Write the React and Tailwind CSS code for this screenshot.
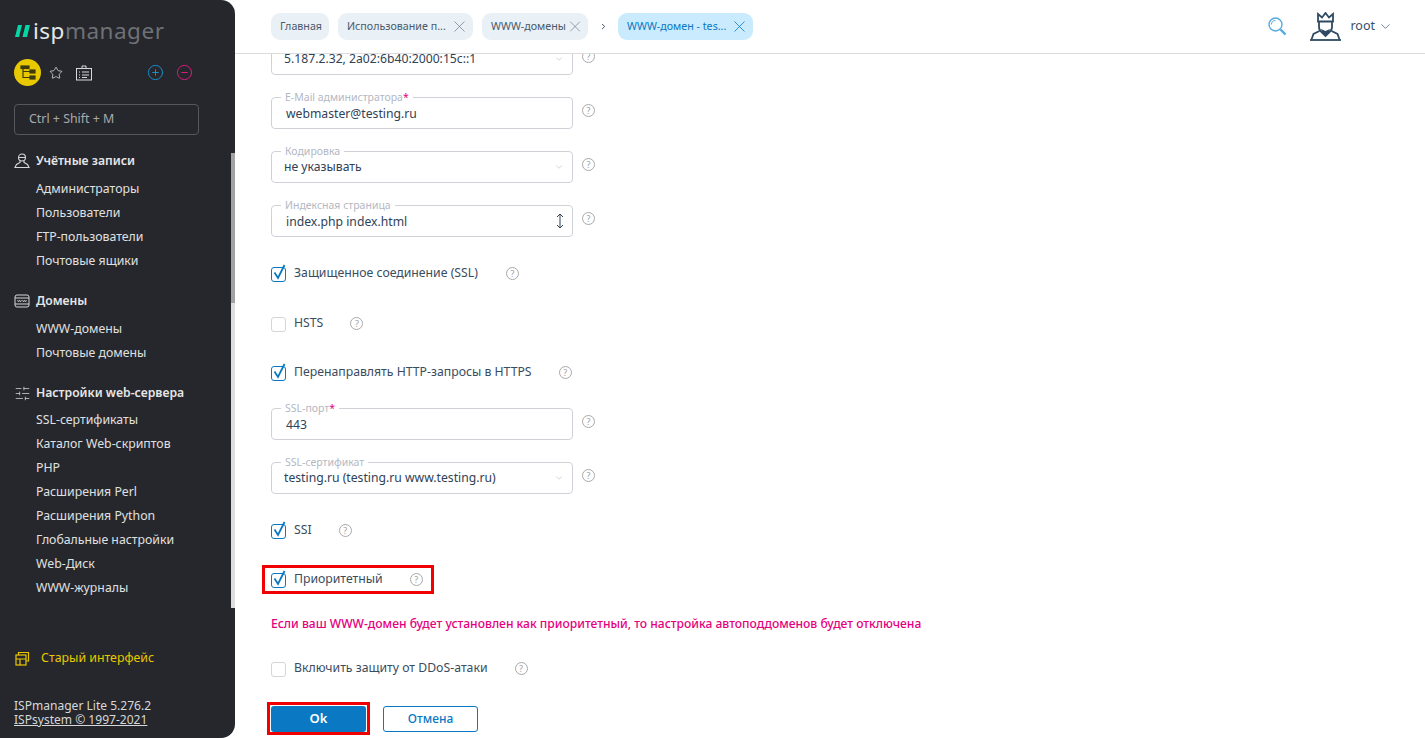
import React from 'react';
import { X, ChevronDown, ChevronRight, Star, CirclePlus, CircleMinus, SlidersHorizontal } from 'lucide-react';

const menu = [
    { title: 'Учётные записи', icon: 'user', gap: 'mt-[4px]', items: ['Администраторы', 'Пользователи', 'FTP-пользователи', 'Почтовые ящики'] },
    { title: 'Домены', icon: 'www', gap: 'mt-[4px]', items: ['WWW-домены', 'Почтовые домены'] },
    { title: 'Настройки web-сервера', icon: 'sliders', gap: 'mt-[3px]', items: ['SSL-сертификаты', 'Каталог Web-скриптов', 'PHP', 'Расширения Perl', 'Расширения Python', 'Глобальные настройки', 'Web-Диск', 'WWW-журналы'] },
];

function MenuIcon({ type }) {
    if (type === 'user') {
        return (
            <svg width="16" height="16" viewBox="0 0 16 16" fill="none" stroke="#d5d6d8" strokeWidth="1.100">
                <circle cx="8" cy="4.500" r="3.500" />
                <path d="M5 4.500h6M6 8v1.500l-3.500 2-1.500 3h14l-1.500-3-3.500-2V8" />
            </svg>
        );
    }
    if (type === 'www') {
        return (
            <svg width="16" height="14" viewBox="0 0 16 14" fill="none" stroke="#d5d6d8" strokeWidth="1">
                <rect x="1" y="1" width="14" height="12" rx="2" />
                <path d="M1 4h14M1 10h14" />
                <path d="M3.500 6l1 2 1-2 1 2 1-2M8.500 6l1 2 1-2 1 2 1-2" strokeWidth="0.700" />
            </svg>
        );
    }
    return <SlidersHorizontal size={17} color="#d5d6d8" strokeWidth={1.100} />;
}

function Sidebar() {
    return (
        <aside className="w-[235px] h-[738px] shrink-0 bg-[#25272c] rounded-r-[14px] relative z-20 flex flex-col overflow-hidden">
            <div className="flex items-center h-[20px] mt-[21px] ml-[15px] gap-[3px]">
                <svg width="15" height="12" viewBox="0 0 15 12">
                    <path d="M3 0h4L4 12H0zM10.500 0H15l-3 12H7.500z" fill="#05d6a6" />
                </svg>
                <span className="text-[22.500px] leading-[20px] tracking-[0.500px]">
                    <span className="text-[#e6e7e8]">isp</span><span className="text-[#6f7175]">manager</span>
                </span>
            </div>
            <div className="flex items-center mt-[18px] ml-[14px]">
                <div className="w-[27px] h-[27px] rounded-full bg-[#e8c900] flex items-center justify-center">
                    <svg width="16" height="16" viewBox="0 0 16 16" fill="none" stroke="#3d3a10" strokeWidth="1.200">
                        <rect x="1" y="1" width="8" height="2.500" fill="#3d3a10" />
                        <rect x="10" y="5" width="5" height="3" fill="#3d3a10" />
                        <rect x="10" y="11" width="5" height="3" fill="#3d3a10" />
                        <path d="M3 3.500v9h7M3 6.500h7" />
                    </svg>
                </div>
                <Star size={14} color="#e2e3e4" strokeWidth={1.300} className="ml-[8px]" />
                <svg width="16" height="16" viewBox="0 0 16 16" fill="none" stroke="#d8d9da" strokeWidth="1" className="ml-[13px]">
                    <rect x="0.500" y="3.500" width="15" height="11.500" />
                    <path d="M6 3.500V1h4v2.500M3 7h1M6 7h7M3 10h1M6 10h7M3 12.500h1M6 12.500h5" />
                </svg>
                <CirclePlus size={17} color="#1b8fc9" strokeWidth={1.400} className="ml-[55px]" />
                <CircleMinus size={17} color="#e0187f" strokeWidth={1.400} className="ml-[12px]" />
            </div>
            <div className="mt-[18px] ml-[14px] w-[185px] h-[31px] border border-[#55575b] rounded-[4px] flex items-center pl-[14px] text-[12.400px] text-[#a9aaad]">
                Ctrl + Shift + M
            </div>
            <nav className="mt-[14px]">
                {menu.map((group) => (
                    <div key={group.title} className="mb-[16px]">
                        <div className="flex items-center h-[24px] pl-[14px] text-[12.200px] font-semibold text-[#e6e6e7]">
                            <span className="w-[22px] flex items-center"><MenuIcon type={group.icon} /></span>
                            <span>{group.title}</span>
                        </div>
                        <ul className={group.gap}>
                            {group.items.map((item) => (
                                <li key={item} className="h-[24px] flex items-center pl-[36px] text-[12.300px] text-[#e0e0e1]">{item}</li>
                            ))}
                        </ul>
                    </div>
                ))}
            </nav>
            <div className="absolute right-0 top-[153px] w-[4px] h-[455px] bg-[#dedede]">
                <div className="w-[4px] h-[150px] bg-[#a3a3a3]" />
            </div>
            <div className="absolute left-[15px] top-[649px] flex items-center text-[12.350px] text-[#e8c900]">
                <svg width="15" height="15" viewBox="0 0 15 15" fill="none" stroke="#e8c900" strokeWidth="1.200">
                    <rect x="1" y="4" width="10" height="10" />
                    <path d="M1 8h10M5 8v6M3.500 4V1.500h10V10H11" />
                </svg>
                <span className="ml-[11px]">Старый интерфейс</span>
            </div>
            <div className="absolute left-[14px] top-[699px] text-[12.050px] leading-[14px] text-[#d8d8d9]">
                <div>ISPmanager Lite 5.276.2</div>
                <div className="underline">ISPsystem © 1997-2021</div>
            </div>
        </aside>
    );
}

function Tab({ label, width, active, closable = true }) {
    return (
        <div className={`h-[27px] rounded-[9px] flex items-center justify-between pl-[9px] pr-[4px] text-[10.700px] ${width} ${active ? 'bg-[#c9ebfd] text-[#0a78c2]' : 'bg-[#e9f0f6] text-[#4a5a6a]'}`}>
            <span className="whitespace-nowrap">{label}</span>
            {closable && <X size={19} strokeWidth={1} color={active ? '#0a78c2' : '#7d8790'} />}
        </div>
    );
}

function Header() {
    return (
        <header className="h-[54px] shrink-0 bg-white border-b border-[#dcdcdc] flex items-center pl-[36px] relative z-10">
            <div className="flex items-center gap-[9px]">
                <Tab label="Главная" width="w-[58px]" closable={false} />
                <Tab label="Использование п..." width="w-[135px]" />
                <Tab label="WWW-домены" width="w-[106px]" />
            </div>
            <ChevronRight size={9} strokeWidth={2.500} color="#37485a" className="ml-[11px] mr-[10px]" />
            <Tab label="WWW-домен - tes..." width="w-[135px]" active />
            <div className="ml-auto flex items-center text-[12.500px] text-[#37506a]">
                <svg width="19" height="19" viewBox="0 0 19 19" fill="none" stroke="#55a9de" className="mr-[23px]">
                    <circle cx="7.500" cy="7.500" r="6.500" strokeWidth="1.400" />
                    <path d="M3.500 7.500a4 4 0 0 1 4-4" strokeWidth="1" />
                    <path d="M12.500 12.500l5 5" strokeWidth="2.400" />
                </svg>
                <svg width="31" height="29" viewBox="0 0 31 29" fill="none" stroke="#2f4a62" strokeWidth="1.800" className="mr-[9px]">
                    <path d="M8 9.500V2l4 3.500L15.500 1 19 5.500 23 2v7.500z" />
                    <path d="M9 10v5c0 2 1 4 2.500 5l4 4 4-4c1.500-1 2.500-3 2.500-5v-5" />
                    <path d="M11 17l4.500 2 4.500-2-1 3-3.500 4-3.500-4z" fill="#2f4a62" stroke="none" />
                    <path d="M9.500 19L3.500 22 1.500 27.500" />
                    <path d="M21.500 19l6 3 2 5.500" />
                    <path d="M0 28h31" />
                </svg>
                <span>root</span>
                <ChevronDown size={15} strokeWidth={1.100} color="#37506a" className="ml-[3px] mr-[32px]" />
            </div>
        </header>
    );
}

function Hint({ className = '' }) {
    return (
        <span className={`w-[13px] h-[13px] rounded-full border border-[#a9a9a9] text-[#a0a0a0] text-[9px] leading-none flex items-center justify-center shrink-0 ${className}`}>?</span>
    );
}

function Field({ label, required, value, right, inset = 'pl-[14px]', labelInset = 'left-[9px]', valueTop = 'mt-[2px]', className = '' }) {
    return (
        <div className={`flex items-center w-[330px] ${className}`}>
            <div className={`relative w-[302px] h-[32px] border border-[#cfd3d8] rounded-[4px] flex items-center justify-between pr-[8px] text-[12.200px] text-[#2f4256] ${inset}`}>
                {label && (
                    <span className={`absolute -top-[7px] ${labelInset} bg-white px-[4px] text-[10.500px] leading-[12px] text-[#b3b8c4]`}>
                        {label}{required && <span className="text-[#e6007e]">*</span>}
                    </span>
                )}
                <span className={valueTop}>{value}</span>
                {right}
            </div>
            <Hint className="ml-[9px] -mt-[6px]" />
        </div>
    );
}

function Select(props) {
    return <Field {...props} inset="pl-[12px]" valueTop="mt-[1px]" right={<ChevronDown size={10} strokeWidth={1.200} color="#a9adb3" />} />;
}

function CheckRow({ label, checked, hintGap, className = '' }) {
    return (
        <div className={`flex items-center h-[16px] ${className}`}>
            <span className={`w-[15px] h-[15px] rounded-[3px] border translate-y-[1px] relative ${checked ? 'border-[#0a78c2]' : 'border-[#d3d5d8]'}`}>
                {checked && (
                    <svg width="17" height="18" viewBox="0 0 17 18" fill="none" stroke="#0a78c2" strokeWidth="1.800" className="absolute -left-[1px] -top-[5px]">
                        <path d="M3.500 9.500l3.500 5.500 6.500-13" />
                    </svg>
                )}
            </span>
            <span className="ml-[8px] text-[12.250px] text-[#3a4c5e]">{label}</span>
            <Hint className={hintGap} />
        </div>
    );
}

function Form() {
    return (
        <div className="pl-[36px] -mt-[11px]">
            <Select value="5.187.2.32, 2a02:6b40:2000:15c::1" />
            <Field className="mt-[22px]" label="E-Mail администратора" required value="webmaster@testing.ru" />
            <Select className="mt-[22px]" label="Кодировка" value="не указывать" />
            <Field
                className="mt-[22px]"
                label="Индексная страница"
                value="index.php index.html"
                right={
                    <svg width="8" height="16" viewBox="0 0 8 16" fill="none" stroke="#2f4256" strokeWidth="1">
                        <path d="M4 1v14M1 4l3-3 3 3M1 12l3 3 3-3" />
                    </svg>
                }
            />
            <CheckRow className="mt-[28px]" label="Защищенное соединение (SSL)" checked hintGap="ml-[28px]" />
            <CheckRow className="mt-[34px]" label="HSTS" hintGap="ml-[27px]" />
            <CheckRow className="mt-[33px]" label="Перенаправлять HTTP-запросы в HTTPS" checked hintGap="ml-[27px]" />
            <Field className="mt-[28px]" label="SSL-порт" required value="443" />
            <Select className="mt-[22px]" label="SSL-сертификат" value="testing.ru (testing.ru www.testing.ru)" />
            <CheckRow className="mt-[28px]" label="SSI" checked hintGap="ml-[27px]" />
            <div className="mt-[27px] -ml-[9px] w-[172px] h-[29px] border-[3px] border-[#f00000] flex items-center pl-[6px]">
                <CheckRow label="Приоритетный" checked hintGap="ml-[27px]" />
            </div>
            <p className="mt-[23px] h-[14px] leading-[14px] text-[12.100px] font-medium text-[#e6007e]">
                Если ваш WWW-домен будет установлен как приоритетный, то настройка автоподдоменов будет отключена
            </p>
            <CheckRow className="mt-[29px]" label="Включить защиту от DDoS-атаки" hintGap="ml-[27px]" />
            <div className="mt-[26px] flex items-center -ml-[4px]">
                <div className="w-[103px] h-[33px] border-[3px] border-[#f00000] flex items-center justify-center">
                    <button className="w-[95px] h-[26px] rounded-[3px] bg-[#0a78c2] text-white text-[13px] font-semibold">Ok</button>
                </div>
                <button className="ml-[13px] w-[95px] h-[26px] rounded-[3px] border border-[#0a78c2] bg-white text-[#0a78c2] text-[12px] font-medium">Отмена</button>
            </div>
        </div>
    );
}

export default function App() {
    return (
        <div className="w-[1425px] h-[738px] overflow-hidden bg-white flex font-['Noto_Sans','Open_Sans',sans-serif]">
            <Sidebar />
            <main className="flex-1 flex flex-col min-w-0 h-[738px] overflow-hidden">
                <Header />
                <Form />
            </main>
        </div>
    );
}
